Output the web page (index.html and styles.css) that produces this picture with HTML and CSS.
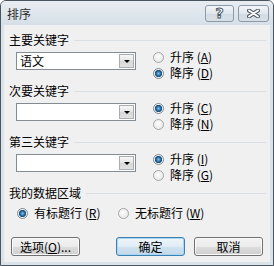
FILE: index.html
```html
<!DOCTYPE html>
<html lang="zh-CN">
<head>
    <meta charset="UTF-8">
    <title>排序</title>
    <link rel="stylesheet" href="styles.css">
</head>
<body>
    <div class="dialog">
        <div class="titlebar">
            <span class="title">排序</span>
            <div class="caption-btns">
                <span class="cap-btn help">?</span>
                <span class="cap-btn close">
                    <svg width="13" height="9" viewBox="0 0 13 9">
                        <path d="M2 1.5 L11 7.5 M11 1.5 L2 7.5" stroke="#4f5a64" stroke-width="4" stroke-linecap="round"/>
                        <path d="M2 1.5 L11 7.5 M11 1.5 L2 7.5" stroke="#fff" stroke-width="2" stroke-linecap="round"/>
                    </svg>
                </span>
            </div>
        </div>
        <div class="content">
            <div class="group-label"><span>主要关键字</span></div>
            <div class="key-row">
                <div class="combo"><span class="combo-text">语文</span><span class="combo-btn"></span></div>
                <div class="order">
                    <div class="radio"><span class="dot"></span>升序 (<u>A</u>)</div>
                    <div class="radio"><span class="dot on"></span>降序 (<u>D</u>)</div>
                </div>
            </div>

            <div class="group-label"><span>次要关键字</span></div>
            <div class="key-row">
                <div class="combo"><span class="combo-text"></span><span class="combo-btn"></span></div>
                <div class="order">
                    <div class="radio"><span class="dot on"></span>升序 (<u>C</u>)</div>
                    <div class="radio"><span class="dot"></span>降序 (<u>N</u>)</div>
                </div>
            </div>

            <div class="group-label"><span>第三关键字</span></div>
            <div class="key-row">
                <div class="combo"><span class="combo-text"></span><span class="combo-btn"></span></div>
                <div class="order">
                    <div class="radio"><span class="dot on"></span>升序 (<u>I</u>)</div>
                    <div class="radio"><span class="dot"></span>降序 (<u>G</u>)</div>
                </div>
            </div>

            <div class="group-label"><span>我的数据区域</span></div>
            <div class="header-row">
                <div class="radio wide"><span class="dot on"></span>有标题行 (<u>R</u>)</div>
                <div class="radio"><span class="dot"></span>无标题行 (<u>W</u>)</div>
            </div>

            <div class="btn-row">
                <span class="btn">选项(<u>O</u>)...</span>
                <span class="btn btn-ok">确定</span>
                <span class="btn btn-cancel">取消</span>
            </div>
        </div>
    </div>
</body>
</html>
```

FILE: styles.css
```css
*{margin:0;padding:0;box-sizing:border-box;}
body{background:#fff;font-family:"Noto Sans CJK SC","Liberation Sans",sans-serif;font-size:12px;color:#000;}
u{text-decoration:underline;text-underline-offset:1px;}

.dialog{width:274px;height:266px;border:1px solid #4a545e;border-radius:6px 6px 0 0;background:#dbe3ea;display:flex;flex-direction:column;overflow:hidden;}
.titlebar{height:24px;flex-shrink:0;display:flex;align-items:flex-start;justify-content:space-between;padding:0 4px 0 6px;background:linear-gradient(#e8edf2,#d6dfe7);}
.title{line-height:24px;padding-top:1px;color:#2a2a2a;}
.caption-btns{display:flex;gap:4px;margin-top:4px;}
.cap-btn{height:17px;border:1px solid #8c99a6;border-radius:3px;background:linear-gradient(#f2f5f8,#dfe6ec 50%,#d2dbe3 51%,#d8e0e7);display:flex;align-items:center;justify-content:center;}
.help{width:29px;font-family:"DejaVu Sans",sans-serif;font-size:14px;font-weight:bold;color:#fff;-webkit-text-stroke:1px #4f5a64;line-height:15px;}
.close{width:31px;}

.content{flex:1;margin:0 3px 3px 3px;background:#f0f0f0;padding:8px 4px 0 5px;}
.group-label{display:flex;align-items:center;height:14px;line-height:14px;margin-top:3px;}
.group-label:first-child{margin-top:0;}
.group-label::after{content:"";flex:1;margin-left:5px;border-top:1px solid #d9dfe4;}

.key-row{display:flex;margin-top:2px;height:32px;}
.combo{margin:3px 0 0 7px;width:120px;height:18px;border:1px solid #838b93;background:#fff;display:flex;align-items:center;justify-content:space-between;padding:0 1px 0 3px;}
.combo-text{line-height:16px;}
.combo-btn{width:15px;height:14px;border:1px solid #a9adb1;background:linear-gradient(#f7f7f7,#e4e4e4 50%,#d6d6d6 51%,#e2e2e2);display:flex;align-items:center;justify-content:center;}
.combo-btn::after{content:"";border-left:3px solid transparent;border-right:3px solid transparent;border-top:3px solid #000;margin-top:1px;}

.order{margin-left:17px;}
.radio{display:flex;align-items:center;height:16px;line-height:16px;white-space:nowrap;}
.dot{width:11px;height:11px;margin-right:6px;border:1px solid #a3a6a9;border-radius:50%;background:radial-gradient(circle at 45% 40%,#fdfdfd,#e2e2e2);flex-shrink:0;}
.dot.on{border-color:#7d8a96;background:radial-gradient(circle at 50% 50%,#7fc0ea 0,#2b6ea3 2.2px,#1a4c75 3.4px,#f6f6f6 3.9px,#e1e1e1 100%);}

.header-row{display:flex;margin-top:5px;padding-left:8px;}
.wide{width:101px;}

.btn-row{display:flex;margin-top:16px;padding-left:2px;}
.btn{width:69px;height:19px;line-height:17px;text-align:center;border:1px solid #707070;border-radius:3px;background:linear-gradient(#f3f3f3,#ebebeb 50%,#dddddd 51%,#cfcfcf);box-shadow:inset 0 0 0 1px #fbfbfb;white-space:nowrap;}
.btn-ok{margin-left:36px;border-color:#3c7fb1;background:linear-gradient(#eef5fa,#e0ecf5 50%,#cfe2ef 51%,#c3d9ea);box-shadow:inset 0 0 0 1px #a9d6f2;}
.btn-cancel{margin-left:9px;}
```
